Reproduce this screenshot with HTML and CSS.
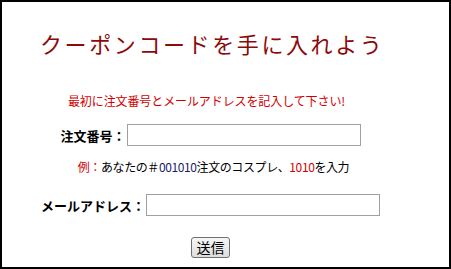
FILE: index.html
```html
<!DOCTYPE html>
<html lang="ja">
<head>
    <meta charset="UTF-8">
    <title>クーポンコードを手に入れよう</title>
    <link rel="stylesheet" href="styles.css">
</head>
<body>
    <div id="frame">
        <h1 class="title">クーポンコードを手に入れよう</h1>
        <div class="form">
            <p class="notice">最初に注文番号とメールアドレスを記入して下さい!</p>
            <div class="row">
                <label class="label" for="order">注文番号：</label>
                <input class="field" type="text" id="order">
            </div>
            <p class="example"><span class="red">例：</span>あなたの＃<span class="navy">001010</span>注文のコスプレ、<span class="red">1010</span>を入力</p>
            <div class="row row-mail">
                <label class="label" for="mail">メールアドレス：</label>
                <input class="field" type="text" id="mail">
            </div>
            <div class="actions">
                <button class="send" type="button">送信</button>
            </div>
        </div>
    </div>
</body>
</html>
```

FILE: styles.css
```css
body {
    margin: 0;
    font-family: 'Noto Sans CJK JP', 'DejaVu Sans', sans-serif;
    background: #ffffff;
}

#frame {
    box-sizing: border-box;
    width: 451px;
    height: 269px;
    border: 2px solid #000000;
}

.title {
    margin: 0;
    padding: 28px 0 0 38px;
    font-size: 22px;
    line-height: 26px;
    font-weight: 400;
    letter-spacing: 2.6px;
    color: #8b0a0a;
}

.form {
    padding-right: 30px;
    text-align: center;
}

.notice {
    margin: 37px 0 0;
    padding-right: 8px;
    font-size: 12px;
    line-height: 16px;
    letter-spacing: -0.1px;
    color: #d40000;
}

.row {
    display: flex;
    justify-content: center;
    align-items: center;
    margin-top: 15px;
}

.row-mail {
    margin-top: 19px;
}

.label {
    font-size: 13px;
    font-weight: bold;
    color: #000000;
    margin-right: 1px;
}

.field {
    box-sizing: border-box;
    width: 234px;
    height: 22px;
    margin: 0;
    border: 1px solid #a0a0a0;
    padding: 2px 4px;
}

.example {
    margin: 13px 0 0;
    padding-left: 6px;
    font-size: 12px;
    line-height: 16px;
    letter-spacing: -0.4px;
    color: #000000;
}

.red {
    color: #d40000;
}

.navy {
    color: #1a1a6e;
}

.actions {
    margin-top: 18px;
}

.send {
    width: 39px;
    height: 21px;
    padding: 0;
    font-family: inherit;
    font-size: 14px;
    line-height: 18px;
    color: #000000;
    border: 1px solid #707070;
    border-radius: 3px;
    background: linear-gradient(#f6f6f6, #dedede);
}
```
